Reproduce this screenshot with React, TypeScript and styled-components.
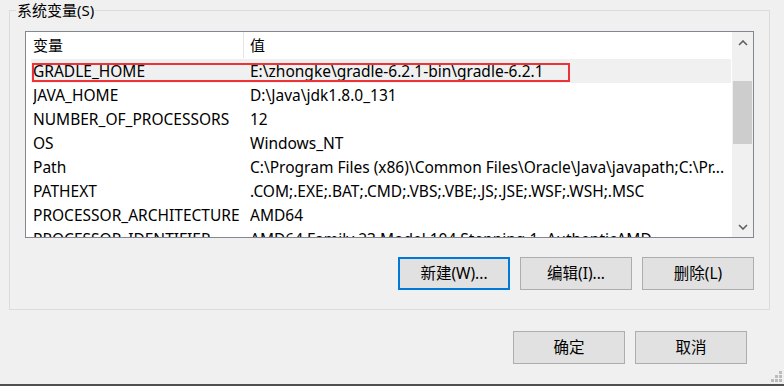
import React from "react";
import styled, { createGlobalStyle } from "styled-components";

const GlobalStyle = createGlobalStyle`
  html, body { margin: 0; padding: 0; background: #f0f0f0; }
  body { font-family: "Noto Sans", "Noto Sans CJK SC", sans-serif; }
  * { box-sizing: border-box; }
`;

const Window = styled.div`
  position: relative;
  width: 784px;
  height: 386px;
  background: #f0f0f0;
  border-bottom: 2px solid #4f4f4f;
  padding: 0 15px 0 9px;
  display: flex;
  flex-direction: column;
  font-size: 15px;
  color: #000;
`;

const GroupBox = styled.fieldset`
  margin: 0;
  width: 761px;
  min-width: 0;
  border: 1px solid #dcdcdc;
  padding: 11px 15px 19px 15px;
  display: flex;
  flex-direction: column;
`;

const GroupTitle = styled.legend`
  font-size: 15px;
  line-height: 20px;
  padding: 0 1px;
  margin-left: -9px;
  color: #000;
`;

const ListBox = styled.div`
  width: 729px;
  height: 207px;
  border: 1px solid #828790;
  background: #fff;
  display: flex;
  overflow: hidden;
`;

const ListBody = styled.div`
  flex: 1;
  display: flex;
  flex-direction: column;
  overflow: hidden;
`;

const HeaderRow = styled.div`
  display: flex;
  height: 27px;
  flex-shrink: 0;
  line-height: 26px;
`;

const HeaderCell = styled.div<{ $w?: number; $divider?: boolean }>`
  ${(p) => (p.$w ? `width: ${p.$w}px;` : "flex: 1;")}
  padding-left: ${(p) => (p.$divider ? 7 : 6)}px;
  border-right: ${(p) => (p.$divider ? "1px solid #e5e5e5" : "none")};
  height: 26px;
  white-space: nowrap;
`;

const Row = styled.div<{ $selected?: boolean }>`
  position: relative;
  display: flex;
  flex-shrink: 0;
  height: 24px;
  line-height: 24px;
  font-size: 15.5px;
  margin-left: 5px;
  width: 700px;
  padding-left: 2px;
  background: ${(p) => (p.$selected ? "#f0f0f0" : "transparent")};
  white-space: nowrap;
`;

const NameCell = styled.div`
  width: 217px;
  flex-shrink: 0;
  overflow: hidden;
`;

const ValueCell = styled.div`
  flex: 1;
  overflow: hidden;
`;

const Highlight = styled.div`
  position: absolute;
  left: 1px;
  top: 4px;
  width: 538px;
  height: 19px;
  border: 2px solid #ee3338;
  pointer-events: none;
`;

const ScrollBar = styled.div`
  width: 21px;
  margin-left: 1px;
  background: #f0f0f0;
  display: flex;
  flex-direction: column;
  flex-shrink: 0;
`;

const ArrowButton = styled.div`
  height: 21px;
  display: flex;
  align-items: center;
  justify-content: center;
  flex-shrink: 0;
`;

const Track = styled.div`
  flex: 1;
  padding: 28px 1px 0 1px;
`;

const Thumb = styled.div`
  height: 63px;
  background: #cdcdcd;
`;

const ButtonRow = styled.div`
  display: flex;
  justify-content: flex-end;
  gap: 10px;
  margin-top: 19px;
`;

const FooterRow = styled.div`
  display: flex;
  justify-content: flex-end;
  gap: 10px;
  margin-top: 21px;
  padding-right: 22px;
`;

const Button = styled.button<{ $primary?: boolean }>`
  width: 112px;
  height: 33px;
  background: #e1e1e1;
  border: ${(p) => (p.$primary ? "2px solid #0078d7" : "1px solid #adadad")};
  font-family: "Noto Sans", "Noto Sans CJK SC", sans-serif;
  font-size: 15.5px;
  color: #000;
  padding: 0;
  line-height: 1;
`;

const Grip = styled.svg`
  position: absolute;
  right: 2px;
  bottom: 2px;
`;

const rows: [string, string][] = [
  ["GRADLE_HOME", "E:\\zhongke\\gradle-6.2.1-bin\\gradle-6.2.1"],
  ["JAVA_HOME", "D:\\Java\\jdk1.8.0_131"],
  ["NUMBER_OF_PROCESSORS", "12"],
  ["OS", "Windows_NT"],
  ["Path", "C:\\Program Files (x86)\\Common Files\\Oracle\\Java\\javapath;C:\\Pr..."],
  ["PATHEXT", ".COM;.EXE;.BAT;.CMD;.VBS;.VBE;.JS;.JSE;.WSF;.WSH;.MSC"],
  ["PROCESSOR_ARCHITECTURE", "AMD64"],
  ["PROCESSOR_IDENTIFIER", "AMD64 Family 23 Model 104 Stepping 1, AuthenticAMD"],
];

const Chevron = ({ up }: { up?: boolean }) => (
  <svg width="10" height="6" viewBox="0 0 10 6">
    <polyline
      points={up ? "1,5 5,1 9,5" : "1,1 5,5 9,1"}
      fill="none"
      stroke="#606060"
      strokeWidth="1.6"
    />
  </svg>
);

export default function App() {
  return (
    <>
      <GlobalStyle />
      <Window>
        <GroupBox>
          <GroupTitle>系统变量(S)</GroupTitle>
          <ListBox>
            <ListBody>
              <HeaderRow>
                <HeaderCell $w={218} $divider>变量</HeaderCell>
                <HeaderCell>值</HeaderCell>
              </HeaderRow>
              {rows.map(([n, v], i) => (
                <Row key={n} $selected={i === 0}>
                  <NameCell>{n}</NameCell>
                  <ValueCell>{v}</ValueCell>
                  {i === 0 && <Highlight />}
                </Row>
              ))}
            </ListBody>
            <ScrollBar>
              <ArrowButton>
                <Chevron up />
              </ArrowButton>
              <Track>
                <Thumb />
              </Track>
              <ArrowButton>
                <Chevron />
              </ArrowButton>
            </ScrollBar>
          </ListBox>
          <ButtonRow>
            <Button $primary>新建(W)...</Button>
            <Button>编辑(I)...</Button>
            <Button>删除(L)</Button>
          </ButtonRow>
        </GroupBox>
        <FooterRow>
          <Button>确定</Button>
          <Button>取消</Button>
        </FooterRow>
        <Grip width="12" height="12" viewBox="0 0 12 12">
          <g fill="#bcbcbc">
            <rect x="9" y="1" width="3" height="3" />
            <rect x="5" y="5" width="3" height="3" />
            <rect x="9" y="5" width="3" height="3" />
            <rect x="1" y="9" width="3" height="3" />
            <rect x="5" y="9" width="3" height="3" />
            <rect x="9" y="9" width="3" height="3" />
          </g>
        </Grip>
      </Window>
    </>
  );
}
